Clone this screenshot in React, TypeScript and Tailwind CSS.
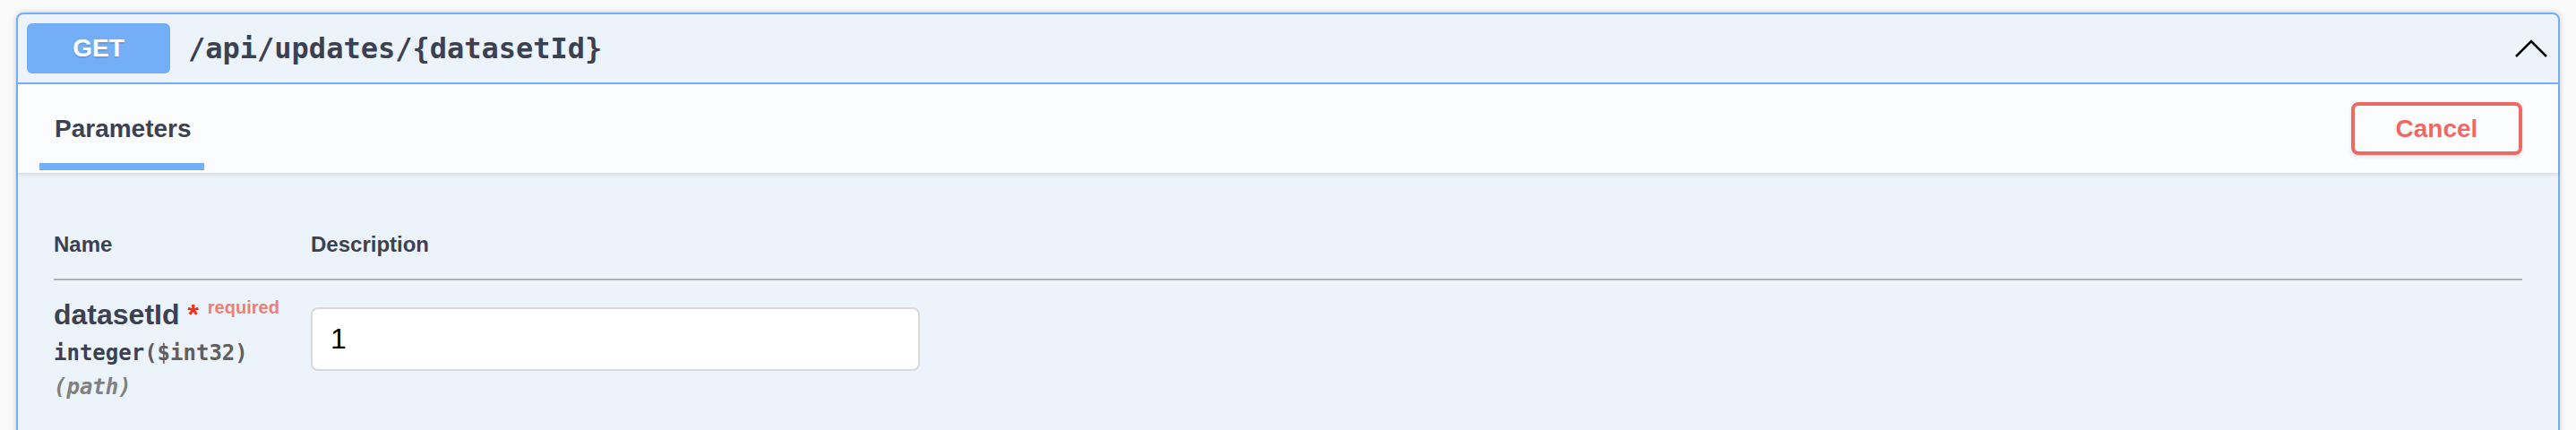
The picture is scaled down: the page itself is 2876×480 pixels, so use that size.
export default function App() {
  return (
    <div className="h-[480px] w-[2876px] overflow-hidden bg-[#fafafa] px-[18px] pt-[14px] font-['Liberation_Sans',Arial,sans-serif]">
      <div className="rounded-lg border-2 border-[#73aef7] bg-[#ecf3fa] shadow-[0_0_6px_rgba(0,0,0,0.19)]">
        {/* Summary */}
        <div className="flex items-center border-b-2 border-[#73aef7] p-[10px]">
          <span className="flex h-[56px] w-[160px] items-center justify-center rounded-md bg-[#73aef7] text-[28px] font-bold text-white [text-shadow:0_2px_0_rgba(0,0,0,0.1)]">
            GET
          </span>
          <span className="flex-1 px-5 font-['DejaVu_Sans_Mono',monospace] text-[32px] font-bold text-[#3b4151]">
            /api/updates/{"{datasetId}"}
          </span>
          <svg width="40" height="40" viewBox="0 0 40 40" fill="none">
            <polyline points="3,29 20,12 37,29" stroke="#000" strokeWidth="2.5" />
          </svg>
        </div>

        {/* Section header */}
        <div className="flex h-[99px] items-center justify-between bg-[#fbfcfe] px-10 shadow-[0_2px_4px_rgba(0,0,0,0.1)]">
          <div className="-ml-4 flex flex-col self-stretch justify-end pb-[3px]">
            <span className="pl-[17px] text-[28px] font-bold leading-[32px] text-[#3b4151]">Parameters</span>
            <span className="mt-[22px] h-2 w-[184px] bg-[#73aef7]" />
          </div>
          <button className="h-[59px] w-[191px] rounded-lg border-4 border-[#ec6a63] text-[28px] font-bold text-[#ec6a63] shadow-[0_2px_4px_rgba(0,0,0,0.1)]">
            Cancel
          </button>
        </div>

        {/* Parameters table */}
        <div className="px-10 pt-10 pb-10">
          <div className="flex border-b-2 border-[#adb1bd] pt-[25px] pb-[23px] text-[24px] font-bold leading-[30px] text-[#3b4151]">
            <div className="w-[287px]">Name</div>
            <div>Description</div>
          </div>
          <div className="flex pt-5 pb-5">
            <div className="w-[287px] pr-5">
              <div className="whitespace-nowrap text-[32px] font-bold leading-[37px] text-[#3b4151]">
                datasetId
                <span className="text-[#ea3323]">&nbsp;*</span>
                <span className="px-[10px] align-[12px] text-[20px] leading-[14px] text-[#eb7f79]">required</span>
              </div>
              <div className="py-[10px] font-['DejaVu_Sans_Mono',monospace] text-[24px] font-bold leading-[28px] text-[#3b4151]">
                integer<span className="text-[#606060]">($int32)</span>
              </div>
              <div className="font-['DejaVu_Sans_Mono',monospace] text-[24px] font-bold italic leading-[28px] text-[#808080]">
                (path)
              </div>
            </div>
            <div>
              <input
                readOnly
                defaultValue="1"
                className="mt-[10px] h-[71px] w-[680px] rounded-lg border-2 border-[#d9d9d9] bg-white px-5 font-['Liberation_Sans',Arial,sans-serif] text-[32px] text-black outline-none"
              />
            </div>
          </div>
        </div>
      </div>
    </div>
  );
}
